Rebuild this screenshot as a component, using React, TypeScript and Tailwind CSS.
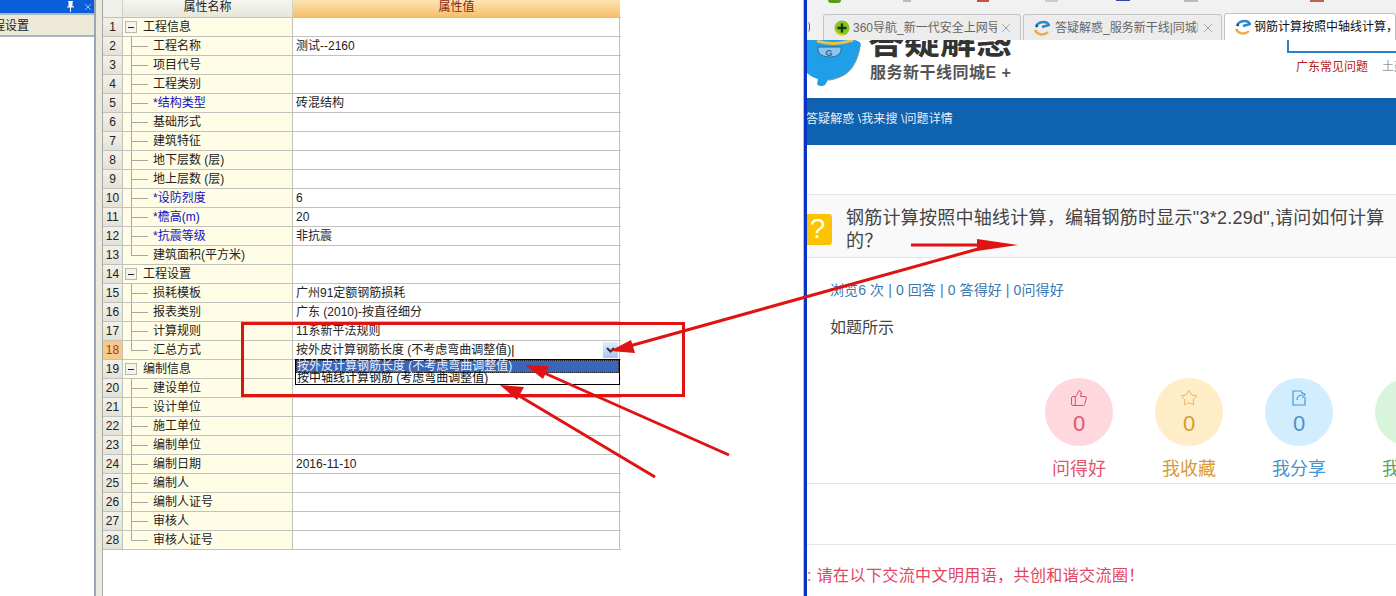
import { ThumbsUp, Star, X } from "lucide-react";

type Row = {
  no: number;
  name: string;
  value?: string;
  group?: boolean;
  required?: boolean;
  last?: boolean;
  active?: boolean;
};

const rows: Row[] = [
  { no: 1, name: "工程信息", group: true },
  { no: 2, name: "工程名称", value: "测试--2160" },
  { no: 3, name: "项目代号" },
  { no: 4, name: "工程类别" },
  { no: 5, name: "*结构类型", value: "砖混结构", required: true },
  { no: 6, name: "基础形式" },
  { no: 7, name: "建筑特征" },
  { no: 8, name: "地下层数 (层)" },
  { no: 9, name: "地上层数 (层)" },
  { no: 10, name: "*设防烈度", value: "6", required: true },
  { no: 11, name: "*檐高(m)", value: "20", required: true },
  { no: 12, name: "*抗震等级", value: "非抗震", required: true },
  { no: 13, name: "建筑面积(平方米)", last: true },
  { no: 14, name: "工程设置", group: true },
  { no: 15, name: "损耗模板", value: "广州91定额钢筋损耗" },
  { no: 16, name: "报表类别", value: "广东 (2010)-按直径细分" },
  { no: 17, name: "计算规则", value: "11系新平法规则" },
  { no: 18, name: "汇总方式", value: "按外皮计算钢筋长度 (不考虑弯曲调整值)", last: true, active: true },
  { no: 19, name: "编制信息", group: true },
  { no: 20, name: "建设单位" },
  { no: 21, name: "设计单位" },
  { no: 22, name: "施工单位" },
  { no: 23, name: "编制单位" },
  { no: 24, name: "编制日期", value: "2016-11-10" },
  { no: 25, name: "编制人" },
  { no: 26, name: "编制人证号" },
  { no: 27, name: "审核人" },
  { no: 28, name: "审核人证号", last: true },
];

const NameCell = ({ row }: { row: Row }) => {
  if (row.group) {
    return (
      <div className="flex h-full items-center bg-[#fffde6] pl-[2px]">
        <div className="flex h-[12px] w-[12px] items-center justify-center border border-[#b8b8b0] bg-[#f4f4ec]">
          <div className="h-px w-[6px] bg-[#222]" />
        </div>
        <span className="ml-[6px] text-[#222]">{row.name}</span>
      </div>
    );
  }
  return (
    <div className="flex h-full items-center bg-[#fffde6] pl-[8px]">
      <div className="flex h-full w-[17px] flex-col">
        <div className="h-1/2 border-l border-[#a8a8a0]" />
        <div className={`h-1/2 border-t border-[#a8a8a0] ${row.last ? "" : "border-l"}`} />
      </div>
      <span className={`ml-[5px] ${row.required ? "text-[#1010c0]" : "text-[#222]"}`}>{row.name}</span>
    </div>
  );
};

const TableRow = ({ row }: { row: Row }) => (
  <div className="grid h-[19px] grid-cols-[20px_170px_327px] border-b border-[#c2c2bc] text-[12px] leading-[18px]">
    <div
      className={`flex items-center justify-center border-r border-[#c2c2bc] ${
        row.active ? "bg-[#f9c98c] text-[#a04010]" : "bg-gradient-to-b from-[#f2f2ea] to-[#e2e2d8] text-[#222]"
      }`}
    >
      {row.no}
    </div>
    <div className="border-r border-[#c2c2bc]">
      <NameCell row={row} />
    </div>
    <div className="flex items-center justify-between border-r border-[#c2c2bc] bg-white pl-[3px] text-[#222]">
      <span>
        {row.value}
        {row.active && <span className="text-black">|</span>}
      </span>
      {row.active && (
        <div className="mr-px flex h-[16px] w-[15px] items-center justify-center bg-gradient-to-b from-[#e4eefa] to-[#a8c4ea]">
          <svg width="9" height="6" viewBox="0 0 9 6">
            <path d="M1 1l3.5 3.5L8 1" stroke="#24365a" strokeWidth="2" fill="none" />
          </svg>
        </div>
      )}
    </div>
  </div>
);

const PinIcon = () => (
  <svg width="9" height="11" viewBox="0 0 9 11" fill="white">
    <path d="M2 0h5v1H6.500v4.500H8v1H5V11H4V6.500H1v-1h1.500V1H2z" />
  </svg>
);

const LeftPanel = () => (
  <div className="flex h-full w-[103px] shrink-0">
    <div className="flex w-[96px] flex-col border-r-2 border-[#9aa6b4]">
      <div className="flex h-[13px] items-center justify-end gap-[8px] bg-[#0a5ed8] pr-px text-white">
        <PinIcon />
        <X size={10} strokeWidth={1.5} />
      </div>
      <div className="h-[24px] overflow-hidden whitespace-nowrap border-y-2 border-y-[#a9b6c6] bg-[#ece9d8] text-[12px] leading-[22px] text-[#222]">
        <span className="-ml-[19px] inline-block">工程设置</span>
      </div>
      <div className="flex-1 bg-white" />
    </div>
    <div className="w-[7px] border-r border-[#a8a8a8] bg-[#e9e9dc]" />
  </div>
);

const PropertyTable = () => (
  <div className="w-[518px] shrink-0">
    <div className="grid h-[18px] grid-cols-[20px_170px_327px] border-b border-[#c2c2bc] text-[12px] leading-[14px]">
      <div className="border-r border-[#d2d2cc] bg-[#f0f0e8]" />
      <div className="border-r border-[#d2d2cc] bg-gradient-to-b from-[#f6f6f0] to-[#e6e6da] text-center text-[#222]">属性名称</div>
      <div className="bg-gradient-to-b from-[#fde4b4] to-[#f6bf66] text-center text-[#8a1c10]">属性值</div>
    </div>
    {rows.map((row) => (
      <TableRow key={row.no} row={row} />
    ))}
  </div>
);

const Browser360 = () => (
  <svg width="16" height="16" viewBox="0 0 16 16" className="shrink-0">
    <circle cx="8" cy="8" r="7.500" fill="#8dc21f" />
    <path d="M1 9a7 7 0 0 0 11 5A9 9 0 0 1 1 9z" fill="#f4d21f" />
    <path d="M8 3.500v9M3.500 8h9" stroke="#123a10" strokeWidth="2.400" />
  </svg>
);

const BrowserE = () => (
  <svg width="16" height="16" viewBox="0 0 16 16" className="shrink-0">
    <path d="M2 7c1-5 10-7 13-2l-7 2" stroke="#2a88c8" strokeWidth="2.400" fill="none" />
    <path d="M1 10c2 5 9 6 13 2" stroke="#eeaa44" strokeWidth="2.400" fill="none" />
    <circle cx="3" cy="6" r="1.200" fill="#18507c" />
  </svg>
);

const Tabs = () => (
  <div className="h-[40px] shrink-0 overflow-hidden bg-[#f1f1f1]">
    <div className="flex h-[3px] pl-[21px]">
      <div className="h-[3px] w-[13px] rounded-b-full bg-[#5a9a20]" />
      <div className="ml-[62px] h-[2px] w-[8px] bg-[#bbb]" />
      <div className="ml-[66px] h-[2px] w-[12px] bg-[#c85040]" />
      <div className="ml-[56px] h-[2px] w-[13px] bg-[#ccc]" />
      <div className="ml-[58px] h-px w-[14px] bg-[#3344aa]" />
      <div className="ml-[54px] h-[2px] w-[14px] bg-[#bbb]" />
      <div className="ml-[112px] h-[2px] w-[14px] bg-[#c06050]" />
    </div>
    <div className="mt-[11px] flex h-[26px] items-stretch text-[12px]">
      <div className="flex w-[16px] shrink-0 items-center">
        <div className="h-[10px] w-[3px] rounded-r-full border-r border-[#666]" />
      </div>
      <div className="flex min-w-0 flex-1 items-stretch gap-[2px]">
        <div className="flex w-[198px] shrink-0 items-center overflow-hidden rounded-t-[3px] border border-b-0 border-[#c4c4c4] bg-[#ececec] pl-[10px] text-[#666]">
          <Browser360 />
          <span className="ml-[3px] w-[144px] overflow-hidden whitespace-nowrap">360导航_新一代安全上网导航</span>
          <X size={14} strokeWidth={1.5} className="ml-[2px] shrink-0 text-[#999]" />
        </div>
        <div className="flex w-[199px] shrink-0 items-center overflow-hidden rounded-t-[3px] border border-b-0 border-[#c4c4c4] bg-[#ececec] pl-[10px] text-[#666]">
          <BrowserE />
          <span className="ml-[5px] w-[143px] overflow-hidden whitespace-nowrap">答疑解惑_服务新干线|同城E+</span>
          <X size={14} strokeWidth={1.5} className="ml-[3px] shrink-0 text-[#999]" />
        </div>
        <div className="-mt-[1px] flex min-w-0 flex-1 items-center overflow-hidden whitespace-nowrap rounded-t-[3px] border border-b-0 border-[#c4c4c4] bg-white pl-[10px] text-[#111]">
          <BrowserE />
          <span className="ml-[3px]">钢筋计算按照中轴线计算，编辑钢筋时显示</span>
        </div>
      </div>
    </div>
  </div>
);

const Mascot = () => (
  <svg width="56" height="50" viewBox="0 0 56 50" className="shrink-0">
    <path d="M0 0h48c6 2 7 4 5 8-3 14-9 25-20 29-5 2-8 3-12 3l-3 5c-3 2-7 1-8-1l1-5c-4-1-8-3-11-6z" fill="#1f9fe8" />
    <path d="M53 8c-3 14-9 25-20 29-5 2-8 3-12 3" fill="none" stroke="#8a9a8a" strokeWidth="1" />
    <path d="M10 1c10 3 24 3 36-1" fill="none" stroke="#f0c040" strokeWidth="3" />
    <path d="M11 7h23c1 6-3 10-11 10-9 0-13-4-12-10z" fill="#8cc6ee" stroke="#2a6a9a" strokeWidth="1" />
    <text x="22" y="16" textAnchor="middle" fontSize="9" fontWeight="700" fill="#2a6a9a">G</text>
  </svg>
);

const Header = () => (
  <div className="flex h-[58px] shrink-0 overflow-hidden bg-white">
    <Mascot />
    <div className="ml-[5px] flex w-[149px] shrink-0 flex-col whitespace-nowrap">
      <div className="-mt-[16px] h-[36px] text-[36px] font-bold leading-[36px] text-[#333]">答疑解惑</div>
      <div className="ml-[2px] mt-[4px] text-[16px] font-bold leading-[18px] tracking-[0.5px] text-[#555]">服务新干线同城E +</div>
    </div>
    <div className="ml-[269px] flex min-w-0 flex-1 flex-col overflow-hidden whitespace-nowrap">
      <div className="ml-px h-[13px] border-b-2 border-l-2 border-[#2a82c8]" />
      <div className="ml-[10px] mt-[5px] flex text-[12px]">
        <span className="text-[#b82020]">广东常见问题</span>
        <span className="ml-[14px] text-[#999]">土建</span>
      </div>
    </div>
  </div>
);

const Stat = ({ count, label, circle, text, icon }: { count: number; label: string; circle: string; text: string; icon: React.ReactNode }) => (
  <div className="flex w-[68px] shrink-0 flex-col items-center">
    <div className={`flex h-[68px] w-[68px] flex-col items-center rounded-full pt-[11px] ${circle}`}>
      {icon}
      <span className={`text-[22px] leading-[34px] ${text}`}>{count}</span>
    </div>
    <span className={`mt-[10px] whitespace-nowrap text-[18px] leading-[26px] ${text}`}>{label}</span>
  </div>
);

const ShareIcon = () => (
  <svg width="18" height="18" viewBox="0 0 18 18" fill="none" stroke="#4a9ad6" strokeWidth="1.200">
    <path d="M12 2H3v14h12V8" />
    <path d="M7 11c0-3 2-5 6-5M11 3l4 2.500L12.500 9" />
  </svg>
);

const BrowserPane = () => (
  <div className="flex h-full min-w-0 flex-1">
    <div className="w-px shrink-0 bg-[#b4c4e8]" />
    <div className="w-[3px] shrink-0 bg-[#0a33c4]" />
    <div className="flex min-w-0 flex-1 flex-col overflow-hidden bg-white">
      <Tabs />
      <Header />
      <div className="flex h-[47px] shrink-0 items-center bg-[#0f62b0] pb-[5px] text-[12px] text-[#e8f0f8]">
        <span className="-ml-px whitespace-nowrap tracking-[0.1px]">答疑解惑 \我来搜 \问题详情</span>
      </div>
      <div className="h-[50px] shrink-0 border-b border-[#e4e4e4]" />
      <div className="flex h-[63px] shrink-0 items-center border-b border-[#e4e4e4] bg-[#f9f9f9]">
        <div className="-ml-[4px] mt-[6px] flex h-[31px] w-[29px] shrink-0 items-center justify-center rounded-[3px] bg-[#fcc400] text-[28px] font-light leading-none text-white">?</div>
        <div className="ml-[14px] mt-[7px] whitespace-nowrap text-[18px] leading-[23px] tracking-[0.25px] text-[#444]">
          钢筋计算按照中轴线计算，编辑钢筋时显示"3*2.29d",请问如何计算
          <br />的？
        </div>
      </div>
      <div className="ml-[23px] mt-[22px] whitespace-nowrap text-[14px] leading-[20px] tracking-[0.1px] text-[#3a78b0]">浏览6 次 | 0 回答 | 0 答得好 | 0问得好</div>
      <div className="ml-[23px] mt-[18px] text-[16px] leading-[20px] text-[#444]">如题所示</div>
      <div className="ml-[238px] mt-[40px] flex gap-[42px]">
        <Stat count={0} label="问得好" circle="bg-[#ffd7df]" text="text-[#e2566e]" icon={<ThumbsUp size={18} strokeWidth={1.300} className="text-[#d84a68]" />} />
        <Stat count={0} label="我收藏" circle="bg-[#ffedc8]" text="text-[#d89a38]" icon={<Star size={18} strokeWidth={1.200} className="text-[#e4ae54]" />} />
        <Stat count={0} label="我分享" circle="bg-[#d2eefe]" text="text-[#4a92cc]" icon={<ShareIcon />} />
        <Stat count={0} label="我评论" circle="bg-[#d8f5dc]" text="text-[#58a860]" icon={<div className="h-[18px]" />} />
      </div>
      <div className="mt-px h-[62px] shrink-0 border-y border-[#e4e4e4]" />
      <div className="mt-[21px] whitespace-nowrap text-[16px] leading-[20px] tracking-[0.4px] text-[#e2455f]">: 请在以下交流中文明用语，共创和谐交流圈！</div>
    </div>
  </div>
);

// 截图上后加的红色标注
const Annotations = () => (
  <svg width="1396" height="596" viewBox="0 0 1396 596" className="pointer-events-none absolute left-0 top-0">
    <rect x="242.500" y="323.500" width="441" height="72" fill="none" stroke="#e01212" strokeWidth="3" />
    <line x1="911" y1="245" x2="985" y2="245" stroke="#e01212" strokeWidth="3" />
    <polygon points="1018,245 977,239 977,251" fill="#e01212" />
    <line x1="978" y1="249" x2="626" y2="347" stroke="#e01212" strokeWidth="3" />
    <polygon points="610,351 631,340 635,353" fill="#e01212" />
    <line x1="729" y1="455" x2="542" y2="372" stroke="#e01212" strokeWidth="3" />
    <polygon points="525,365 549,366 543,379" fill="#e01212" />
    <line x1="655" y1="477" x2="516" y2="394" stroke="#e01212" strokeWidth="3" />
    <polygon points="500,385 524,387 517,400" fill="#e01212" />
  </svg>
);

export default function App() {
  return (
    <div className="relative flex h-[596px] w-[1396px] overflow-hidden bg-white font-['Liberation_Sans','Noto_Sans_CJK_SC',sans-serif]">
      <LeftPanel />
      <div className="relative w-[518px] shrink-0">
        <PropertyTable />
        {/* 下拉列表 */}
        <div className="absolute left-[192px] top-[359px] w-[325px] border border-black bg-white text-[12px] leading-[11px]">
          <div className="h-[13px] whitespace-nowrap border border-dotted border-[#222] bg-[#3a66b8] text-[#e8eefa]">按外皮计算钢筋长度 (不考虑弯曲调整值)</div>
          <div className="h-[11px] whitespace-nowrap pl-px text-[#111]">按中轴线计算钢筋 (考虑弯曲调整值)</div>
        </div>
      </div>
      <div className="w-[182px] shrink-0 bg-white" />
      <BrowserPane />
      <Annotations />
    </div>
  );
}
